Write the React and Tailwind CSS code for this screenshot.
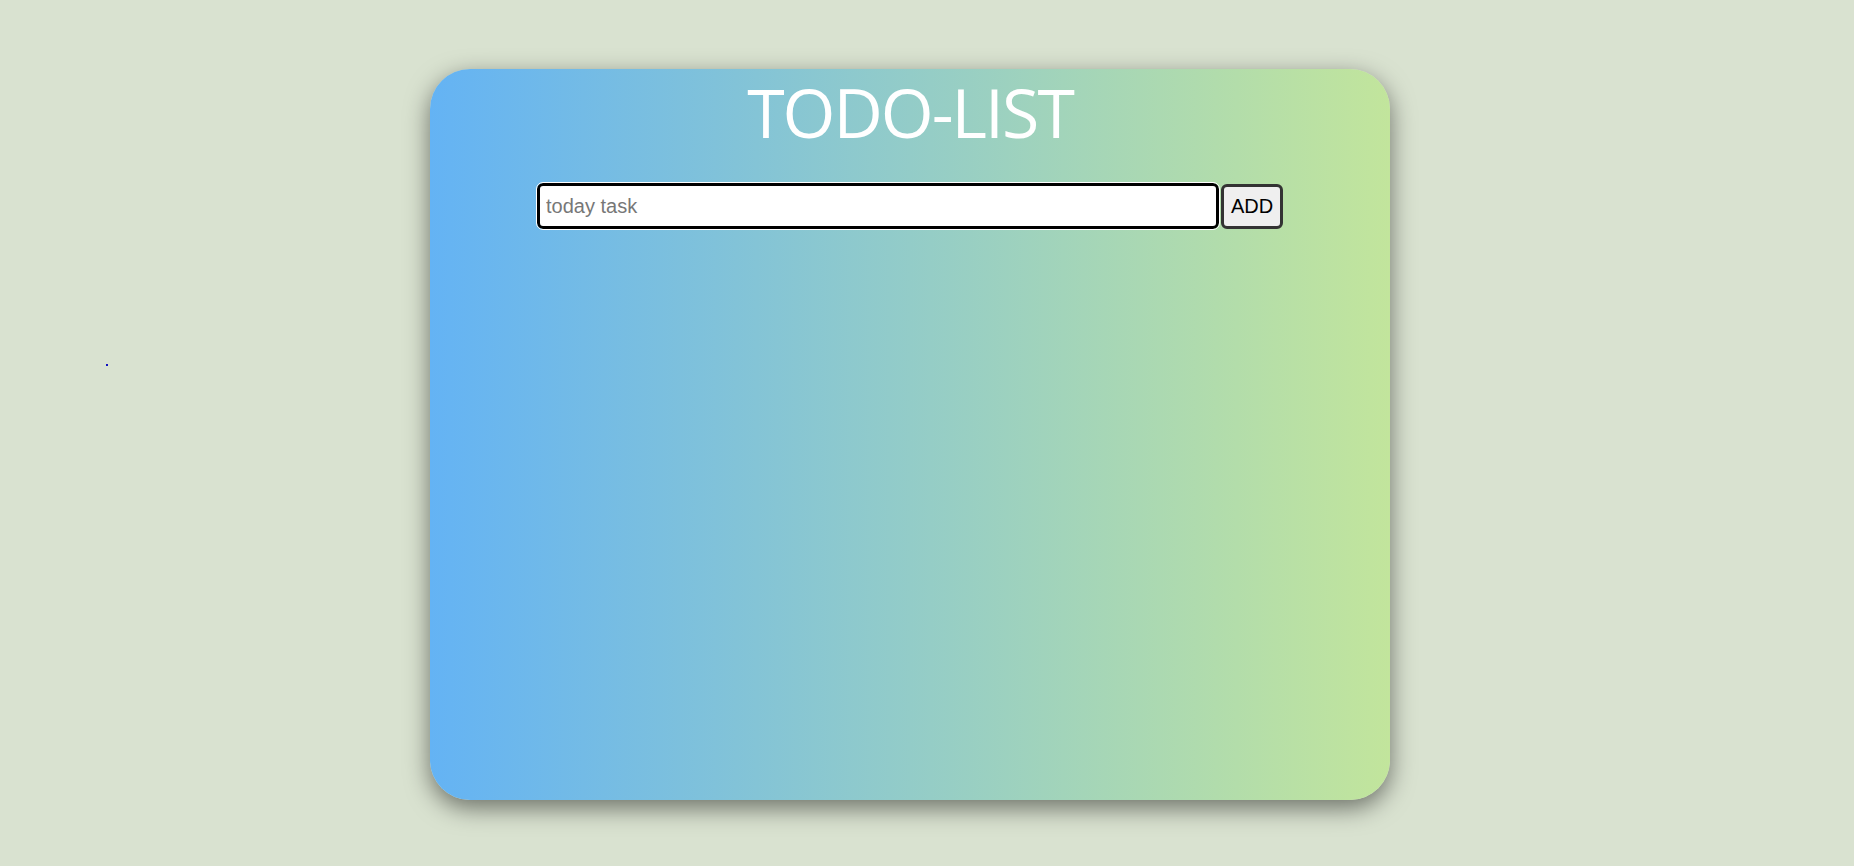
import React from "react";

export default function App() {
  return (
    <div className="relative min-h-screen w-full bg-[#d9e2d0] pt-[69px] pl-[430px]" style={{ fontFamily: "'Liberation Sans', Arial, sans-serif" }}>
      <div className="absolute left-[106px] top-[364px] h-[2px] w-[2px] bg-[#1010c0]" />
      <div className="flex h-[731px] w-[960px] flex-col items-center rounded-[40px] bg-[linear-gradient(to_right,#64b3f4,#c2e59c)] shadow-[0_8px_24px_rgba(0,0,0,0.5)]">
        <h1 className="mt-[3px] text-[68px] leading-[80px] tracking-[-2px] text-white" style={{ fontFamily: "'Open Sans', sans-serif" }}>
          TODO-LIST
        </h1>
        <div className="mt-[31px] flex items-center">
          <input
            autoFocus
            placeholder="today task"
            className="h-[46px] w-[682px] rounded-[6px] border-[3px] border-black bg-white px-[6px] text-[20px] text-black outline outline-1 outline-white placeholder:text-[#777]"
          />
          <button className="ml-[2px] h-[45px] w-[62px] rounded-[6px] border-[3px] border-[#333] bg-[#efefef] text-[20px] text-black">
            ADD
          </button>
        </div>
      </div>
    </div>
  );
}
